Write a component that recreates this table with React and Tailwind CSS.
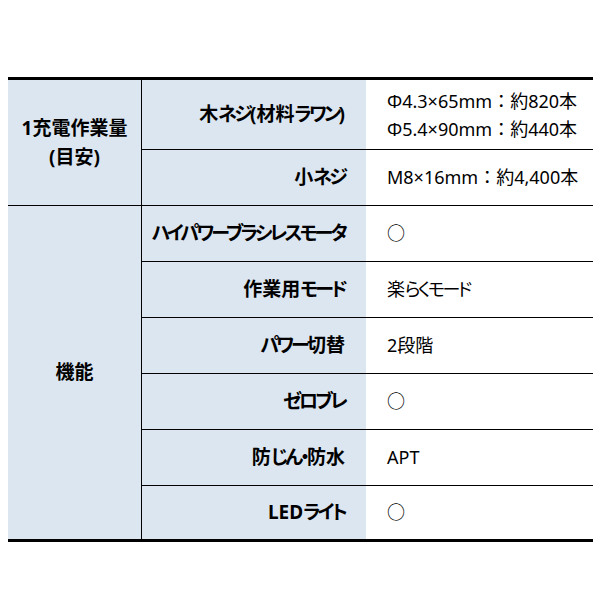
import React from 'react';

const rows = [
  { label: '作業用モード', value: '楽らくモード' },
  { label: 'パワー切替', value: '2段階' },
  { label: 'ゼロブレ', value: '○' },
  { label: '防じん・防水', value: 'APT' },
  { label: 'LEDライト', value: '○', last: true },
];

// kana runs are set narrower, like the proportional kana of the original font
function Jp({ t, bold }) {
  return t.split(/([\u3040-\u30ff]+)/).map((part, i) =>
    /[\u3040-\u30ff]/.test(part) ? (
      <span
        key={i}
        className={`[font-feature-settings:'palt'] ${bold ? 'tracking-[-2.8px]' : 'tracking-[-2.5px]'}`}
      >
        {part}
      </span>
    ) : (
      <span key={i}>{part}</span>
    )
  );
}

const head = 'bg-[#dce6f1] border-black flex items-center justify-end pr-[21px] font-bold text-[19px] whitespace-nowrap';
const cell = 'border-black flex items-center pl-[21px] text-[18px] whitespace-nowrap';

export default function App() {
  return (
    <div
      className="w-[600px] h-[600px] bg-white pt-[77px] pl-[8px] text-black"
      style={{ fontFamily: '"Noto Sans", "Noto Sans CJK JP", sans-serif' }}
    >
      <div className="w-[585px] border-t-[3px] border-b-[3px] border-black grid grid-cols-[134px_224px_227px] grid-rows-[70px_56px_56px_56px_56px_56px_56px_53px]">
        {/* 1充電作業量 */}
        <div className="row-span-2 bg-[#dce6f1] border-r border-b border-black flex flex-col items-center justify-center font-bold text-[19px] leading-[29px]">
          <span>1充電作業量</span>
          <span>(目安)</span>
        </div>
        <div className={`${head} border-b`}><Jp t="木ネジ(材料ラワン)" bold /></div>
        <div className="border-b border-black flex flex-col justify-center pl-[21px] text-[18px] leading-[28px] whitespace-nowrap">
          <span>Φ4.3×65mm：約820本</span>
          <span>Φ5.4×90mm：約440本</span>
        </div>
        <div className={`${head} border-b`}><Jp t="小ネジ" bold /></div>
        <div className={`${cell} border-b`}>M8×16mm：約4,400本</div>

        {/* 機能 */}
        <div className="row-span-6 bg-[#dce6f1] border-r border-black flex items-center justify-center font-bold text-[19px]">
          機能
        </div>
        <div className={`${head} border-b`}><Jp t="ハイパワーブラシレスモータ" bold /></div>
        <div className={`${cell} border-b`}>○</div>
        {rows.map((r) => (
          <React.Fragment key={r.label}>
            <div className={`${head} ${r.last ? '' : 'border-b'}`}><Jp t={r.label} bold /></div>
            <div className={`${cell} ${r.last ? '' : 'border-b'}`}><Jp t={r.value} /></div>
          </React.Fragment>
        ))}
      </div>
    </div>
  );
}
